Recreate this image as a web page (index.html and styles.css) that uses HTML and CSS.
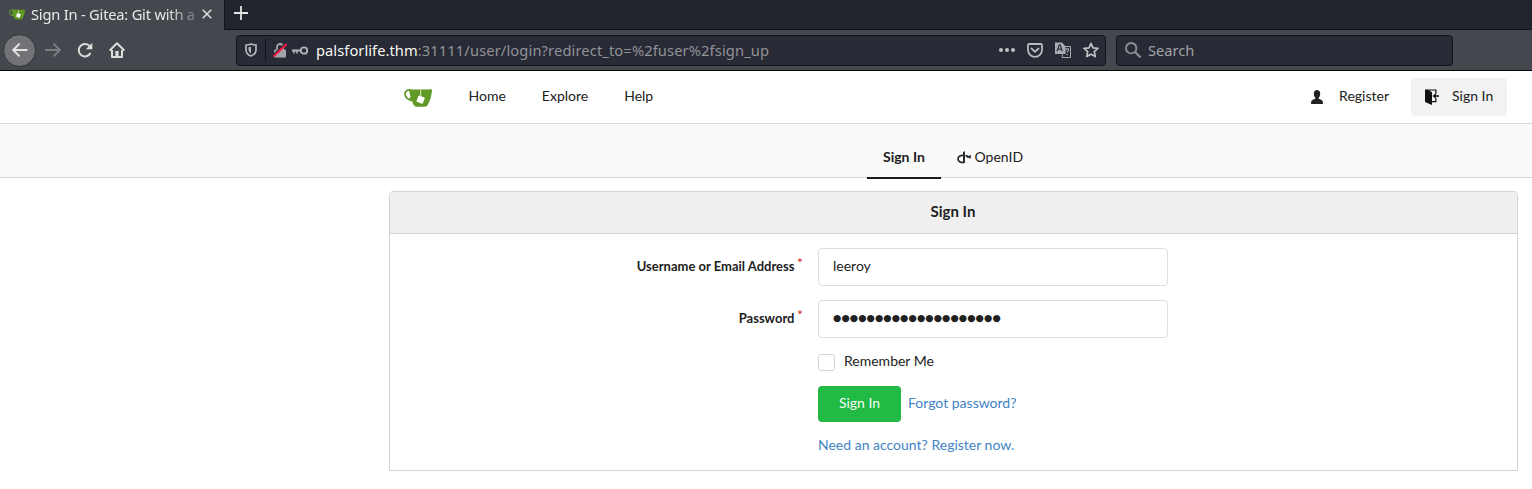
FILE: index.html
```html
<!DOCTYPE html>
<html lang="en">
<head>
<meta charset="utf-8">
<title>Sign In - Gitea: Git with a cup of tea</title>
<link rel="stylesheet" href="styles.css">
</head>
<body>
<svg class="defs" width="0" height="0">
  <symbol id="cup" viewBox="0 0 28 18">
    <path fill="#609926" d="M5 .3C12 .7 19 .7 26.500.2c1.200 0 1.600.4 1.500 1.600-.5 5.400-2.300 11-4.300 14.300-.7 1.200-1.400 1.700-2.700 1.700h-8.400c-2 0-3.200-1.700-4-4.300l-.6-2.200C6.300 8 5.500 4 5 .3z"/>
    <path fill="none" stroke="#609926" stroke-width="1.800" d="M6 1.200C2.600.7.9 2.600 1.100 5.300c.3 3.400 3.200 5.800 7.900 6"/>
    <path fill="#609926" d="M5.500 8.500l4-.5v4.400c-2 0-3.300-.4-4.500-1.200z"/>
    <path fill="#fff" d="M15.300 6.500l5 2q.7.300.4 1l-1.900 4.800q-.3.700-1 .4l-4.900-1.900q-.7-.3-.4-1l1.900-4.900q.3-.6.900-.4z"/>
    <path stroke="#fff" stroke-width=".8" fill="none" d="M16.700 1v7"/>
  </symbol>
</svg>
<div class="tabs">
  <div class="tab">
    <svg class="favicon" width="16" height="11"><use href="#cup"/></svg>
    <span class="tab-title">Sign In - Gitea: Git with a</span>
    <svg class="close" width="10" height="10" viewBox="0 0 10 10"><path d="M.7.700l8.600 8.600M9.300.700L.7 9.300" stroke="#dcdcda" stroke-width="1.600"/></svg>
  </div>
  <div class="new-tab"><svg width="14" height="14" viewBox="0 0 14 14"><path d="M7 0v14M0 7h14" stroke="#e4e4e2" stroke-width="1.800"/></svg></div>
</div>
<div class="toolbar">
  <div class="back"><svg width="16" height="16" viewBox="0 0 16 16"><path d="M15.500 8H1.200M7.600 1.600L1.200 8l6.400 6.400" fill="none" stroke="#e4e4e2" stroke-width="2"/></svg></div>
  <svg class="forward" width="16" height="16" viewBox="0 0 16 16"><path d="M0 8h14.500M8.500 1.600L14.900 8l-6.400 6.400" fill="none" stroke="#7b7d81" stroke-width="2"/></svg>
  <svg class="reload" width="16" height="16" viewBox="0 0 16 16"><path d="M13.500 11A6.200 6.200 0 1 1 12.900 4.400" fill="none" stroke="#dcdcda" stroke-width="2"/><path d="M15.300.8v6.500H8.800z" fill="#dcdcda"/></svg>
  <svg class="home" width="16" height="16" viewBox="0 0 16 16"><path d="M.6 8.600L8 1.200l7.400 7.400M3 8v7h10V8" fill="none" stroke="#dcdcda" stroke-width="2" stroke-linejoin="round"/><path d="M6.400 15V9h3.200v6z" fill="#dcdcda"/></svg>
  <div class="url-box">
    <svg class="shield" width="12" height="14" viewBox="0 0 12 14"><path d="M6 1C4.500 1.700 2.800 2 1 2v4.500c0 3 2 5.500 5 6.500 3-1 5-3.500 5-6.500V2C9.200 2 7.500 1.700 6 1z" fill="none" stroke="#b4b5b8" stroke-width="1.700"/><path d="M6 3.700v6.700C4.300 9.500 3.500 8 3.500 6.300V4.200z" fill="#b4b5b8"/></svg>
    <span class="url-divider"></span>
    <svg class="lock" width="14" height="15" viewBox="0 0 14 15"><path d="M4 7V4a3 3 0 0 1 6 0v3" fill="none" stroke="#a3a4a8" stroke-width="1.800"/><rect x="1" y="6.500" width="12" height="8" rx="1" fill="#a3a4a8"/><path d="M.5 12.300L12.800 1" stroke="#282a36" stroke-width="2.600"/><path d="M.3 13.600L13.800 1" stroke="#ff1744" stroke-width="2"/></svg>
    <svg class="key" width="16" height="9" viewBox="0 0 16 9"><circle cx="12" cy="4.500" r="3.200" fill="none" stroke="#b4b5b8" stroke-width="1.800"/><path d="M0 3.600h9v2H5.700v2H4.200v-2H2.700v2H1.200v-2H0z" fill="#b4b5b8"/></svg>
    <span class="url"><b>palsforlife.thm</b>:31111/user/login?redirect_to=%2fuser%2fsign_up</span>
    <svg class="dots" width="16" height="4" viewBox="0 0 16 4"><g fill="#c0c1c3"><circle cx="2" cy="2" r="2"/><circle cx="8" cy="2" r="2"/><circle cx="14" cy="2" r="2"/></g></svg>
    <svg class="pocket" width="16" height="15" viewBox="0 0 16 15"><path d="M2.200 1h11.600q1.200 0 1.200 1.200V7a7 6.800 0 0 1-14 0V2.200Q1 1 2.200 1z" fill="none" stroke="#b9babd" stroke-width="1.800"/><path d="M4.500 5.500L8 8.800l3.500-3.300" fill="none" stroke="#b9babd" stroke-width="1.800" stroke-linecap="round"/></svg>
    <svg class="translate" width="16" height="16" viewBox="0 0 16 16"><path d="M0 .5h7l3.500 4v7.500H0z" fill="#aaabae"/><path d="M2 9.300L4.300 2.800h.8l2.200 6.500M2.800 7.200h3.800" fill="none" stroke="#30323e" stroke-width="1.200"/><path d="M8 4.500h7.500v11H7.300v-3.200" fill="none" stroke="#aaabae"/><path d="M10.700 8.200c0-2 2.900-2 2.900-.3 0 1.200-1.500 1.200-1.500 2.600M12 12v1.300" fill="none" stroke="#aaabae" stroke-width="1.200"/></svg>
    <svg class="star" width="16" height="16" viewBox="0 0 16 16"><path d="M8 1.300l2 4.600 5 .5-3.700 3.300 1 4.900L8 12.200l-4.300 2.400 1-4.900L1 6.400l5-.5z" fill="none" stroke="#c0c1c3" stroke-width="1.700" stroke-linejoin="round"/></svg>
  </div>
  <div class="search-box">
    <svg width="17" height="16" viewBox="0 0 17 16"><circle cx="6.200" cy="6.200" r="5.200" fill="none" stroke="#8d8e93" stroke-width="1.900"/><path d="M10 10l5.700 5.500" stroke="#8d8e93" stroke-width="2.200"/></svg>
    <span>Search</span>
  </div>
</div>
<nav class="navbar">
  <a class="brand"><svg width="28" height="18"><use href="#cup"/></svg></a>
  <a class="nav-home">Home</a><a class="nav-explore">Explore</a><a>Help</a>
  <div class="nav-right">
    <a class="register"><svg width="12" height="14" viewBox="0 0 12 14"><path d="M6 0C4.100 0 2.800 1.300 2.800 3.500c0 1.800.6 3.300 1.500 4.200v1C2.700 9.300.6 10 .2 11.600L0 14h12l-.2-2.400C11.400 10 9.300 9.300 7.700 8.700v-1c.9-.9 1.500-2.400 1.500-4.200C9.200 1.300 7.900 0 6 0z" fill="#202122"/></svg>Register</a>
    <a class="signin-link"><svg width="14" height="16" viewBox="0 0 14 16"><path d="M0 .5h11.500V5h-1.200V1.600H4L7 3.200V12h3.300V9h1.200v4.200H7V16L0 13z" fill="#111"/><path d="M14 6.200v1.600h-3.200v2L7.400 7l3.400-2.800v2z" fill="#111"/></svg>Sign In</a>
  </div>
</nav>
<div class="subnav">
  <a class="active">Sign In</a>
  <a class="openid"><svg width="14" height="13" viewBox="0 0 14 13"><path d="M6.500 4.500C3.200 4.200 1 5.600 1 8c0 2.200 2.400 3.700 6 3.500M8.500 4.600c1.300.2 2.300.6 3 1.200" fill="none" stroke="#28292a" stroke-width="1.700"/><path d="M6 1.200L8 0v11.600L6 12.600zM13.800 3.700v3.700l-4.400-1z" fill="#28292a"/></svg>OpenID</a>
</div>
<main class="card">
  <h1>Sign In</h1>
  <form>
    <div class="row"><label>Username or Email Address<sup>*</sup></label><div class="input">leeroy</div></div>
    <div class="row"><label>Password<sup>*</sup></label><div class="input password">●●●●●●●●●●●●●●●●●●●●</div></div>
    <div class="remember"><span class="box"></span><span class="remember-text">Remember Me</span></div>
    <div class="actions"><span class="button">Sign In</span><a>Forgot password?</a></div>
    <div class="signup"><a>Need an account? Register now.</a></div>
  </form>
</main>
</body>
</html>
```
FILE: styles.css
```css
* { box-sizing: border-box; }
body { margin: 0; height: 489px; overflow: hidden; background: #fff; color: #212121; font: 14px/20px Lato, sans-serif; }
svg { display: block; flex: none; }
.defs { display: none; }
.tabs { height: 30px; display: flex; background: #21232d; font: 14.67px/20px "Noto Sans", sans-serif; }
.tab { width: 224px; height: 30px; display: flex; align-items: center; padding: 0 0 2px 9px; background: #44474d; }
.tab-title { width: 170px; margin-left: 6px; letter-spacing: -.2px; white-space: nowrap; color: #e8e8e6; -webkit-mask-image: linear-gradient(90deg, #000 136px, transparent 175px); mask-image: linear-gradient(90deg, #000 136px, transparent 175px); }
.close { margin-left: 1px; }
.new-tab { flex: 1; border-left: 1px solid #111319; border-bottom: 1px solid #111319; padding: 6px 0 0 9px; }
.toolbar { height: 41px; display: flex; align-items: center; padding-left: 3px; background: #44474d; border-bottom: 1px solid #08080b; font: 14.67px/20px "Noto Sans", sans-serif; }
.back { width: 33px; height: 33px; display: flex; align-items: center; justify-content: center; border: 1px solid #303238; border-radius: 50%; background: #717377; }
.forward { margin-left: 9px; }
.reload { margin-left: 16px; }
.home { margin-left: 16px; }
.url-box, .search-box { height: 31px; display: flex; align-items: center; background: #282a36; border: 1px solid #111318; border-radius: 4px; }
.url-box { width: 870px; margin-left: 111px; padding-left: 8px; }
.url-divider { width: 1px; height: 22px; margin: 0 7px 0 8px; background: #111318; }
.key { margin-left: 5px; }
.url { width: 683px; margin-left: 8px; color: #929397; white-space: nowrap; letter-spacing: .13px; }
.url b { font-weight: 400; color: #f8f8f2; letter-spacing: .06px; }
.pocket, .translate, .star { margin-left: 12px; }
.search-box { width: 337px; margin-left: 10px; padding-left: 8px; gap: 5px; color: #a2a3a6; }
.search-box span { margin-left: 1px; }
.navbar { height: 53px; display: flex; align-items: center; padding: 0 25px 1px 404px; border-bottom: 1px solid #dbdbdb; }
.brand { margin: 2px 36.500px 0 0; }
.nav-home, .nav-explore { margin-right: 36px; }
.navbar > a:not(.brand) { padding-bottom: 2px; }
.nav-right { margin-left: auto; display: flex; align-items: center; }
.register, .signin-link { line-height: 18px; }
.register { display: flex; align-items: center; gap: 16px; margin-right: 22px; padding-bottom: 2px; }
.register svg, .signin-link svg { margin-top: 2px; }
.signin-link { height: 38px; width: 96px; display: flex; align-items: center; gap: 13px; padding: 0 0 2px 14px; border-radius: 4px; background: #f2f2f2; }
.subnav { height: 54px; display: flex; align-items: flex-end; padding-left: 867px; background: #fafafa; border-bottom: 1px solid #d4d4d5; }
.subnav .active { width: 74px; height: 42px; margin-bottom: -2px; padding: 10px 16px 0; font-weight: 700; border-bottom: 2px solid #1b1c1d; }
.subnav .openid { height: 40px; display: flex; align-items: flex-start; gap: 4px; padding: 10px 15.500px 0; }
.openid svg { margin-top: 4px; }
.card { width: 1129px; height: 280px; margin: 13px 0 0 389px; border: 1px solid #d4d4d5; border-radius: 4px 4px 0 0; }
h1 { margin: 0; height: 42px; padding-right: 1px; border-bottom: 1px solid #d4d4d5; background: #efefef; font: 700 15px/38px Lato, sans-serif; text-align: center; border-radius: 3px 3px 0 0; }
form { padding-top: 14px; }
.row { height: 38px; display: flex; align-items: center; margin-bottom: 14px; }
label { width: 413px; margin-right: 15px; padding-bottom: 2px; font-size: 13px; font-weight: 700; text-align: right; }
sup { margin-left: 2.600px; color: #db2828; font-size: 14px; font-weight: 400; line-height: 0; vertical-align: 3px; }
.input { width: 350px; height: 38px; padding: 7px 14px; border: 1px solid #dededf; border-radius: 4px; }
.password { font: 9.500px/20px "DejaVu Sans", sans-serif; letter-spacing: .1px; }
.remember { height: 20px; display: flex; align-items: center; gap: 9px; padding-left: 428px; }
.remember-text { padding-bottom: 2px; }
.box { width: 17px; height: 17px; border: 1px solid #d4d4d5; border-radius: 3px; }
.actions { height: 36px; display: flex; align-items: center; gap: 7px; margin-top: 14px; padding-left: 428px; }
.actions a { padding-bottom: 2px; }
.button { width: 83px; height: 36px; border-radius: 4px; background: #21ba45; color: #f4fbf5; line-height: 34px; text-align: center; }
.signup { margin: 13px 0 0 428px; }
.actions a, .signup a { color: #4183c4; }
```
